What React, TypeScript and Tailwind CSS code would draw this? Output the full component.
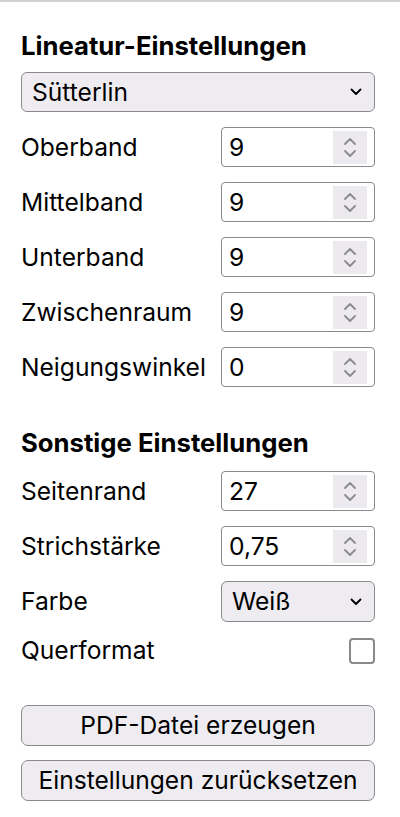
import React from "react";

const font = { fontFamily: "Inter, 'Liberation Sans', sans-serif" };

function Chevron({ className = "" }: { className?: string }) {
  return (
    <svg viewBox="0 0 12 8" className={className} fill="none">
      <polyline points="1.5,1.5 6,6 10.5,1.5" stroke="currentColor" strokeWidth="1.8" strokeLinecap="round" strokeLinejoin="round" />
    </svg>
  );
}

function Spinner() {
  return (
    <div className="flex h-[33px] w-[34px] flex-col items-center justify-center gap-[5px] bg-[#ece9ef] text-[#8c8c8c]">
      <svg viewBox="0 0 12 7" className="h-[7px] w-[12px]" fill="none">
        <polyline points="1,6 6,1 11,6" stroke="currentColor" strokeWidth="1.8" strokeLinecap="round" strokeLinejoin="round" />
      </svg>
      <svg viewBox="0 0 12 7" className="h-[7px] w-[12px]" fill="none">
        <polyline points="1,1 6,6 11,1" stroke="currentColor" strokeWidth="1.8" strokeLinecap="round" strokeLinejoin="round" />
      </svg>
    </div>
  );
}

function NumberRow({ label, value }: { label: string; value: string }) {
  return (
    <div className="flex h-[40px] items-center justify-between">
      <span className="text-[24.6px] text-black">{label}</span>
      <div className="flex h-[40px] w-[154px] items-center justify-between rounded-[4px] border-[1.5px] border-[#8a8a8a] bg-white pl-[7px] pr-[7px]">
        <span className="text-[24.6px] text-black">{value}</span>
        <Spinner />
      </div>
    </div>
  );
}

export default function App() {
  return (
    <div className="min-h-[817px] w-[400px] bg-white" style={font}>
      <div className="h-[2px] bg-[#d2d2d2]" />
      <div className="flex flex-col pl-[21px] pr-[25px]">
        <h2 className="mt-[28px] h-[32px] text-[25.7px] font-bold leading-[32px] text-black">Lineatur-Einstellungen</h2>
        <div className="mt-[10px] flex h-[40px] items-center justify-between rounded-[6px] border-[1.5px] border-[#8a8a8a] bg-[#efecf1] pl-[10px] pr-[12px]">
          <span className="text-[24.6px] text-black">Sütterlin</span>
          <Chevron className="h-[8px] w-[12px] text-black" />
        </div>
        <div className="mt-[15px] flex flex-col gap-[15px]">
          <NumberRow label="Oberband" value="9" />
          <NumberRow label="Mittelband" value="9" />
          <NumberRow label="Unterband" value="9" />
          <NumberRow label="Zwischenraum" value="9" />
          <NumberRow label="Neigungswinkel" value="0" />
        </div>
        <h2 className="mt-[40px] h-[32px] text-[25.7px] font-bold leading-[32px] text-black">Sonstige Einstellungen</h2>
        <div className="mt-[12px] flex flex-col gap-[15px]">
          <NumberRow label="Seitenrand" value="27" />
          <NumberRow label="Strichstärke" value="0,75" />
          <div className="flex h-[41px] items-center justify-between">
            <span className="text-[24.6px] text-black">Farbe</span>
            <div className="flex h-[41px] w-[154px] items-center justify-between rounded-[6px] border-[1.5px] border-[#8a8a8a] bg-[#efecf1] pl-[10px] pr-[12px]">
              <span className="text-[24.6px] text-black">Weiß</span>
              <Chevron className="h-[8px] w-[12px] text-black" />
            </div>
          </div>
          <div className="flex h-[27px] items-center justify-between">
            <span className="text-[24.6px] text-black">Querformat</span>
            <div className="h-[26px] w-[26px] rounded-[4px] border-[2.5px] border-[#8a8a8a] bg-white" />
          </div>
        </div>
        <button className="mt-[41px] flex h-[41px] items-center justify-center rounded-[7px] border-[1.5px] border-[#8a8a8a] bg-[#efecf1] text-[24.6px] text-black">
          PDF-Datei erzeugen
        </button>
        <button className="mt-[14px] flex h-[41px] items-center justify-center rounded-[7px] border-[1.5px] border-[#8a8a8a] bg-[#efecf1] text-[24.6px] text-black">
          Einstellungen zurücksetzen
        </button>
      </div>
    </div>
  );
}
